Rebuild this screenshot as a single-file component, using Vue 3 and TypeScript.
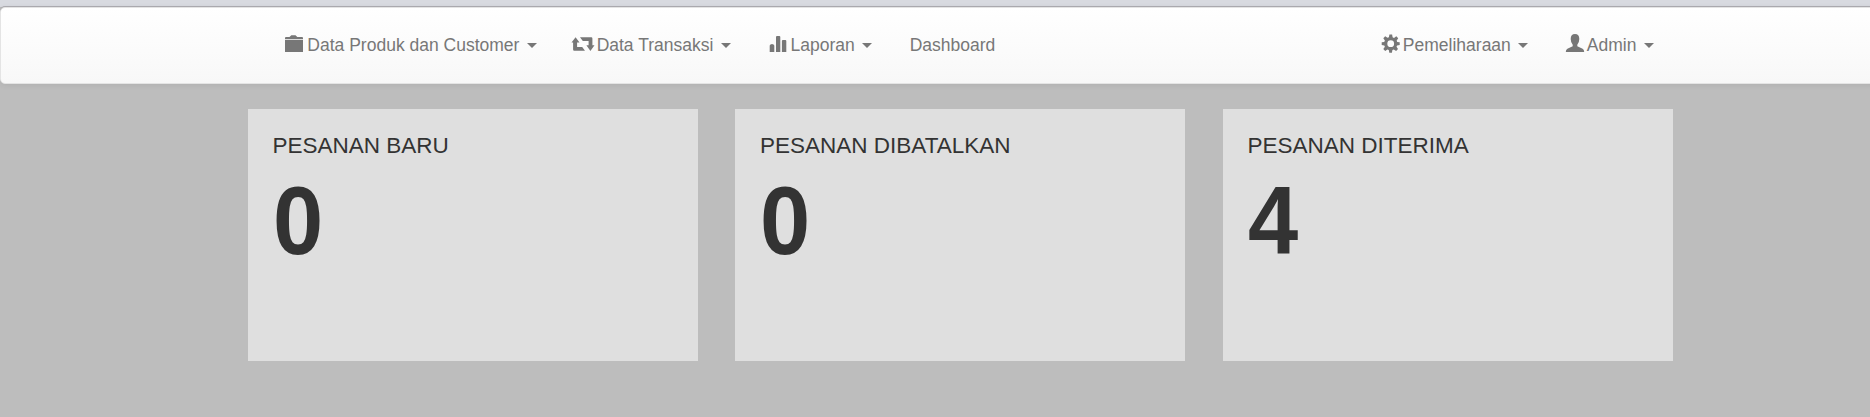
<script setup lang="ts">
type IconName = 'folder' | 'retweet' | 'stats' | 'cog' | 'user'

interface NavItem {
  label: string
  icon?: IconName
  dropdown: boolean
}

const icons: Record<IconName, string> = {
  folder: 'M0 4.2V3Q0 2 1 2H4.5L6.3 .2H10.5L12.3 2H17Q18 2 18 3V4.2ZM0 5H18V17H0Z',
  retweet: 'M-2.5 7.6L1.6 2.2L5.5 7.6H3.1V12H8.2L11 15.8H.2Q-.9 15.8-.9 14.6V7.6ZM6 2.2H17.2Q18.4 2.2 18.4 3.4V10.3H20.5L16.4 16L12.4 10.3H14.6V5.9H8.8Z',
  stats: 'M1.7 17V11Q1.7 9.9 2.6 9.6L4 9.1L5.4 9.6Q6.3 9.9 6.3 11V17ZM8 17V2Q8 1 9 1H11.3Q12.3 1 12.3 2V17ZM13.9 17V6Q13.9 5 14.9 5H17.3Q18.3 5 18.3 6V17Z',
  cog: 'M7.4-.4H10.1L10.6 2.3L12 2.9L14.3 1.3L16.2 3.2L14.7 5.5L15.2 6.9L17.7 7.3V9.9L15.1 10.4L14.5 11.8L16 14.1L14.1 16L11.8 14.5L10.4 15L9.9 17.7H7.3L6.8 15L5.4 14.5L3.2 16L1.3 14.1L2.9 11.8L2.3 10.4L-.3 9.9V7.3L2.2 6.9L2.9 5.5L1.3 3.2L3.2 1.3L5.5 2.8L6.9 2.2ZM8.7 5.3A3.4 3.4 0 1 0 8.7 12.1A3.4 3.4 0 1 0 8.7 5.3Z',
  user: 'M9-1Q13.3-1 13.3 4Q13.3 7.4 11.3 9.7V11.2L16.6 13.8Q18.2 14.6 18.2 17H-.2Q-.2 14.6 1.4 13.8L6.7 11.2V9.7Q4.7 7.4 4.7 4Q4.7-1 9-1Z',
}

const mainItems: NavItem[] = [
  { label: 'Data Produk dan Customer', icon: 'folder', dropdown: true },
  { label: 'Data Transaksi', icon: 'retweet', dropdown: true },
  { label: 'Laporan', icon: 'stats', dropdown: true },
  { label: 'Dashboard', dropdown: false },
]

const accountItems: NavItem[] = [
  { label: 'Pemeliharaan', icon: 'cog', dropdown: true },
  { label: 'Admin', icon: 'user', dropdown: true },
]

const groups = [
  { name: 'main', items: mainItems },
  { name: 'account', items: accountItems },
]

const cards = [
  { title: 'PESANAN BARU', count: 0 },
  { title: 'PESANAN DIBATALKAN', count: 0 },
  { title: 'PESANAN DITERIMA', count: 4 },
]
</script>

<template>
  <div class="viewport">
    <div class="page">
      <nav class="navbar">
        <div class="nav-inner">
          <ul v-for="group in groups" :key="group.name" class="nav-group" :class="group.name">
            <li v-for="item in group.items" :key="item.label">
              <a class="nav-link">
                <svg
                  v-if="item.icon"
                  class="icon"
                  :class="item.icon"
                  viewBox="0 0 17.5 17.5"
                  aria-hidden="true"
                >
                  <path :d="icons[item.icon]" fill-rule="evenodd" />
                </svg>
                <span>{{ item.label }}</span>
                <i v-if="item.dropdown" class="caret"></i>
              </a>
            </li>
          </ul>
        </div>
      </nav>
      <main class="cards">
        <section v-for="card in cards" :key="card.title" class="card">
          <h4 class="card-title">{{ card.title }}</h4>
          <div class="card-count">{{ card.count }}</div>
        </section>
      </main>
    </div>
  </div>
</template>

<style>
body {
  margin: 0;
  background: #bdbdbd;
}
</style>

<style scoped>
.viewport {
  height: 417px;
  overflow: hidden;
  background: #bdbdbd;
  font-family: Arial, "Liberation Sans", sans-serif;
  font-size: 17.5px;
  line-height: 25px;
  color: #333;
}
.page {
  width: 1920px;
  border-top: 7px solid #d8dae0;
  box-sizing: border-box;
}
.navbar {
  box-sizing: border-box;
  height: 77px;
  border: 1px solid #e4e4e4;
  border-radius: 5px;
  background: linear-gradient(#fff, #f8f8f8);
  box-shadow: 0 -1px 0 #aaa9ae, 0 1px 6px rgba(0, 0, 0, 0.075);
}
.nav-inner {
  box-sizing: border-box;
  width: 1425px;
  height: 75px;
  margin: 0 auto;
  padding: 0 0 1px 18.75px;
  display: flex;
  justify-content: space-between;
  align-items: center;
}
.nav-group {
  display: flex;
  margin: 0;
  padding: 0;
  list-style: none;
}
.nav-link {
  display: flex;
  align-items: center;
  padding: 0 18.75px;
  color: #777;
  white-space: nowrap;
}
.icon {
  width: 17.5px;
  height: 17.5px;
  margin: 0 4.86px 2.5px 0;
  overflow: visible;
  fill: #777;
}
.account .icon {
  margin-right: 3.6px;
}
.icon.cog {
  margin-bottom: 3px;
}
.caret {
  margin-left: 7.36px;
  margin-top: 1px;
  border-top: 5px solid #777;
  border-left: 5px solid transparent;
  border-right: 5px solid transparent;
}
.cards {
  display: grid;
  grid-template-columns: repeat(3, 450px);
  column-gap: 37.5px;
  width: 1425px;
  margin: 25px auto 0;
}
.card {
  box-sizing: border-box;
  height: 252px;
  padding: 23.5px 25px;
  background: #dfdfdf;
}
.card-title {
  margin: 0;
  font-size: 22.5px;
  font-weight: 400;
  line-height: 25px;
}
.card-count {
  margin-top: 10.5px;
  font-size: 96px;
  font-weight: 700;
  line-height: 106px;
  transform: scaleX(0.94);
  transform-origin: left;
}
</style>
